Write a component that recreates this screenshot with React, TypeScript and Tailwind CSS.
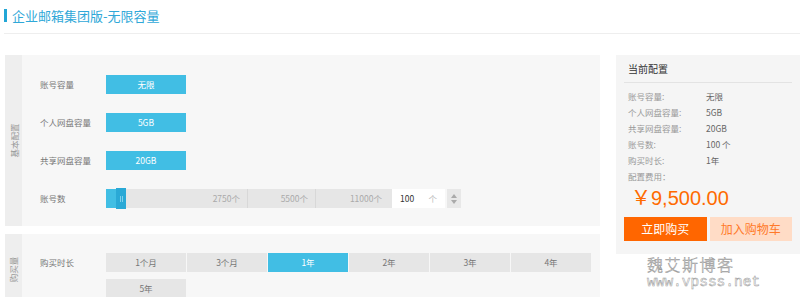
import React from "react";

const font = "font-['Microsoft_YaHei','Noto_Sans_CJK_SC',sans-serif]";

const OptionRow: React.FC<{ label: string; value: string }> = ({ label, value }) => (
  <div className="flex items-center h-[19px]">
    <div className="w-[66px] text-[8.5px] text-[#777]">{label}</div>
    <div className="w-[80px] h-[19px] bg-[#41bee4] text-white text-[8.5px] flex items-center justify-center">
      {value}
    </div>
  </div>
);

const AccountSlider: React.FC = () => (
  <div className="flex items-center h-[19px]">
    <div className="w-[66px] text-[8.5px] text-[#777]">账号数</div>
    <div className="relative w-[286px] h-[19px] bg-[#e6e6e6] flex text-[8.5px] text-[#aaa]">
      <div className="absolute left-0 top-0 h-[19px] w-[14px] bg-[#41bee4]" />
      <div className="absolute left-[10px] -top-[1px] h-[21px] w-[10px] bg-[#2aa9d6] flex items-center justify-center gap-[1px]">
        <span className="w-[1px] h-[6px] bg-[#7fd0ec]" />
        <span className="w-[1px] h-[6px] bg-[#7fd0ec]" />
      </div>
      <div className="w-[142px] border-r border-[#d8d8d8] flex items-center justify-end pr-[7px]">2750个</div>
      <div className="w-[68px] border-r border-[#d8d8d8] flex items-center justify-end pr-[7px]">5500个</div>
      <div className="flex-1 flex items-center justify-end pr-[10px]">11000个</div>
    </div>
    <div className="w-[53px] h-[19px] bg-white flex items-center justify-between pl-[8px] pr-[8px] text-[8.5px]">
      <span className="text-[#333]">100</span>
      <span className="text-[#bbb]">个</span>
    </div>
    <div className="ml-[2px] w-[14px] h-[19px] bg-[#e8e8e8] flex flex-col items-center justify-center gap-[2px]">
      <span className="w-0 h-0 border-l-[3px] border-r-[3px] border-b-[4px] border-l-transparent border-r-transparent border-b-[#aaa]" />
      <span className="w-0 h-0 border-l-[3px] border-r-[3px] border-t-[4px] border-l-transparent border-r-transparent border-t-[#aaa]" />
    </div>
  </div>
);

const SideTag: React.FC<{ text: string }> = ({ text }) => (
  <div className="w-[17px] bg-[#eeeeee] flex items-center justify-center">
    <span className="-rotate-90 whitespace-nowrap text-[8.5px] text-[#999]">{text}</span>
  </div>
);

export default function App() {
  const durations = ["1个月", "3个月", "1年", "2年", "3年", "4年", "5年"];
  const summary = [
    ["账号容量:", "无限"],
    ["个人网盘容量:", "5GB"],
    ["共享网盘容量:", "20GB"],
    ["账号数:", "100 个"],
    ["购买时长:", "1年"],
  ];

  return (
    <div className={`${font} w-[800px] h-[297px] bg-white overflow-hidden`}>
      <div className="ml-[4px] h-[34px] border-b border-[#eeeeee] flex items-center pb-[2px]">
        <span className="w-[3px] h-[13px] bg-[#22a6d6] mr-[5px]" />
        <span className="text-[13px] text-[#2fa8d8]">企业邮箱集团版-无限容量</span>
      </div>

      <div className="flex pt-[21px]">
        <div className="ml-[5px] w-[595px] flex flex-col gap-[8px]">
          <div className="flex h-[171px]">
            <SideTag text="基本配置" />
            <div className="flex-1 bg-[#f7f7f7] pl-[18px] pt-[20px] flex flex-col gap-[19px]">
              <OptionRow label="账号容量" value="无限" />
              <OptionRow label="个人网盘容量" value="5GB" />
              <OptionRow label="共享网盘容量" value="20GB" />
              <AccountSlider />
            </div>
          </div>
          <div className="flex h-[70px]">
            <SideTag text="购买量" />
            <div className="flex-1 bg-[#f7f7f7] pl-[18px] pt-[19px] flex">
              <div className="w-[66px] h-[19px] flex items-center text-[8.5px] text-[#777]">购买时长</div>
              <div className="w-[487px] flex flex-wrap gap-[1px]">
                {durations.map((d) => (
                  <div
                    key={d}
                    className={
                      d === "1年"
                        ? "w-[80px] h-[19px] bg-[#41bee4] text-white text-[8.5px] flex items-center justify-center"
                        : "w-[80px] h-[19px] bg-[#e6e6e6] text-[#777] text-[8.5px] flex items-center justify-center"
                    }
                  >
                    {d}
                  </div>
                ))}
              </div>
            </div>
          </div>
        </div>

        <div className="ml-[16px] w-[184px] flex flex-col">
          <div className="bg-[#f5f5f5] px-[8px] pb-[13px]">
            <div className="h-[28px] flex items-center pl-[4px] border-b border-[#e3e3e3] text-[10px] text-[#333]">
              当前配置
            </div>
            <div className="pl-[4px] pt-[5px] flex flex-col">
              {summary.map(([k, v]) => (
                <div key={k} className="flex h-[16px] items-center text-[8.5px]">
                  <span className="w-[78px] text-[#999]">{k}</span>
                  <span className="text-[#666]">{v}</span>
                </div>
              ))}
              <div className="h-[16px] flex items-center text-[8.5px] text-[#999]">配置费用：</div>
              <div className="h-[28px] flex items-center pl-[3px] text-[20px] text-[#ff6a00] font-['Liberation_Sans','Noto_Sans_CJK_SC',sans-serif]">
                ￥9,500.00
              </div>
            </div>
            <div className="flex gap-[3px] mt-[5px]">
              <button className="w-[84px] h-[24px] bg-[#ff6600] text-white text-[12px] flex items-center justify-center">
                立即购买
              </button>
              <button className="w-[84px] h-[24px] bg-[#ffdcc6] text-[#ff7a2a] text-[12px] flex items-center justify-center">
                加入购物车
              </button>
            </div>
          </div>
          <div className="pl-[31px] pt-[1px] text-white font-light [-webkit-text-stroke:0.5px_#999999]">
            <div className="h-[18px] leading-[18px] text-[16px] tracking-[1.5px] font-['Noto_Sans_CJK_SC',serif]">
              魏艾斯博客
            </div>
            <div className="mt-[1px] h-[16px] leading-[16px] text-[14.5px] font-['Liberation_Mono',monospace]">
              www.vpsss.net
            </div>
          </div>
        </div>
      </div>
    </div>
  );
}
